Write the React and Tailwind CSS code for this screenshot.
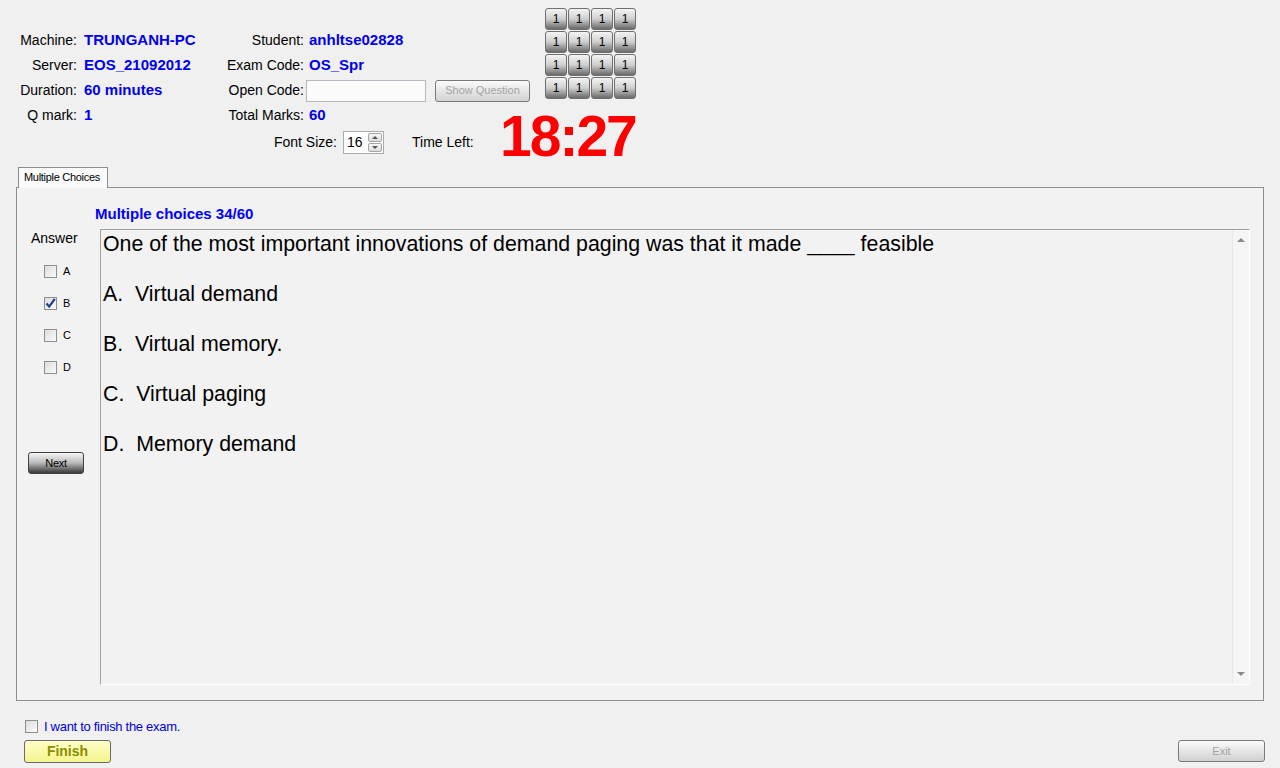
import React from "react";

const font = { fontFamily: '"Liberation Sans", Arial, sans-serif' };

const InfoRow = ({ l1, v1, l2, v2, children }) => (
  <div className="flex h-[25px] items-center text-[14px] text-black">
    <div className="w-[77px] shrink-0 text-right">{l1}</div>
    <div className="ml-[7px] w-[116px] shrink-0 text-[15px] font-bold text-[#0000ee]">{v1}</div>
    <div className="w-[104px] shrink-0 text-right">{l2}</div>
    {children ? children : <div className="ml-[5px] shrink-0 text-[15px] font-bold text-[#0000ee]">{v2}</div>}
  </div>
);

const GridButton = () => (
  <div className="flex h-[22px] w-[22px] items-center justify-center rounded-[3px] border border-[#6f6f6f] bg-linear-to-b from-[#f4f4f4] via-[#cfcfcf] to-[#6a6a6a] text-[12px] leading-none text-black">
    1
  </div>
);

const Checkbox = ({ checked }) => (
  <div className="relative h-[13px] w-[13px] shrink-0 border border-[#8e8f8f] bg-linear-to-br from-[#dcdcdc] to-[#fbfbfb]">
    {checked && (
      <svg viewBox="0 0 13 13" className="absolute -left-px -top-px h-[13px] w-[13px]">
        <path d="M2.5 6.5 L5.2 9.6 L10.8 1.8" fill="none" stroke="#1c3c8c" strokeWidth="2.2" />
      </svg>
    )}
  </div>
);

export default function App() {
  const options = ["A.  Virtual demand", "B.  Virtual memory.", "C.  Virtual paging", "D.  Memory demand"];
  return (
    <div className="h-[768px] w-[1280px] overflow-hidden bg-[#f0f0f0]" style={font}>
      {/* header */}
      <div className="flex h-[167px]">
        <div className="w-[500px] shrink-0 pt-[28px]">
          <InfoRow l1="Machine:" v1="TRUNGANH-PC" l2="Student:" v2="anhltse02828" />
          <InfoRow l1="Server:" v1="EOS_21092012" l2="Exam Code:" v2="OS_Spr" />
          <InfoRow l1="Duration:" v1="60 minutes" l2="Open Code:">
            <div className="ml-[2px] h-[22px] w-[120px] shrink-0 border border-[#b5b8bf] bg-[#fbfbfb]" />
            <div className="ml-[9px] flex h-[22px] w-[95px] shrink-0 items-center justify-center rounded-[3px] border border-[#7a7a7a] bg-linear-to-b from-[#fbfbfb] to-[#d2d2d2] text-[11px] text-[#a3a3a3]">
              Show Question
            </div>
          </InfoRow>
          <InfoRow l1="Q mark:" v1="1" l2="Total Marks:" v2="60" />
          <div className="flex h-[28px] items-center text-[14px] text-black">
            <div className="w-[337px] shrink-0 text-right">Font Size:</div>
            <div className="ml-[6px] flex h-[23px] w-[41px] shrink-0 items-center border border-[#a9abb2] bg-white">
              <span className="ml-[3px] flex-1 text-[14px]">16</span>
              <div className="mr-[1px] flex h-[19px] w-[14px] flex-col gap-[1px]">
                <div className="flex flex-1 items-center justify-center rounded-[2px] border border-[#a6a6a6] bg-linear-to-b from-[#f6f6f6] to-[#dcdcdc]">
                  <div className="h-0 w-0 border-x-[3px] border-b-[3px] border-x-transparent border-b-[#555]" />
                </div>
                <div className="flex flex-1 items-center justify-center rounded-[2px] border border-[#a6a6a6] bg-linear-to-b from-[#f6f6f6] to-[#dcdcdc]">
                  <div className="h-0 w-0 border-x-[3px] border-t-[3px] border-x-transparent border-t-[#555]" />
                </div>
              </div>
            </div>
            <div className="ml-[28px] shrink-0">Time Left:</div>
          </div>
        </div>
        <div className="flex flex-col">
          <div className="ml-[45px] mt-[8px] grid grid-cols-[repeat(4,22px)] gap-[1px]">
            {Array.from({ length: 16 }).map((_, i) => (
              <GridButton key={i} />
            ))}
          </div>
          <div className="mt-[9px] text-[57px] font-bold leading-none tracking-[-2px] text-[#ff0000]">18:27</div>
        </div>
      </div>

      {/* tab */}
      <div className="ml-[18px] flex h-[20px] w-[90px] items-center border border-b-0 border-[#8c8e94] bg-[#fafafa] pl-[5px] text-[11px] tracking-[-0.3px] text-black">
        Multiple Choices
      </div>
      <div className="relative mx-[16px] h-[514px] border border-[#8c8e94] bg-[#f2f2f2]">
        <div className="absolute -top-px left-[2px] h-px w-[88px] bg-[#fafafa]" />
        <div className="pl-[78px] pt-[17px] text-[15px] font-bold leading-[18px] text-[#0000ff]">Multiple choices 34/60</div>
        <div className="flex">
          <div className="w-[83px] shrink-0">
            <div className="mt-[7px] pl-[14px] text-[14px] leading-[16px] text-black">Answer</div>
            <div className="mt-[19px] flex flex-col gap-[19px] pl-[27px]">
              {["A", "B", "C", "D"].map((k) => (
                <div key={k} className="flex h-[13px] items-center">
                  <Checkbox checked={k === "B"} />
                  <span className="ml-[6px] text-[11px] text-black">{k}</span>
                </div>
              ))}
            </div>
            <div className="ml-[11px] mt-[78px] flex h-[22px] w-[56px] items-center justify-center rounded-[3px] border border-[#404040] bg-linear-to-b from-[#f6f6f6] via-[#b9b9b9] to-[#3c3c3c] text-[11px] tracking-[-0.3px] text-black">
              Next
            </div>
          </div>
          <div className="mt-[6px] flex h-[456px] w-[1150px] border border-[#a0a0a0] border-b-white border-r-white">
            <div className="-mt-px flex flex-1 flex-col gap-[20px] pl-[2px] text-[21.33px] leading-[30px] text-black">
              <div>One of the most important innovations of demand paging was that it made ____ feasible</div>
              {options.map((o) => (
                <div key={o} className="whitespace-pre">{o}</div>
              ))}
            </div>
            <div className="flex w-[17px] flex-col items-center justify-between border-l border-[#e8e8e8] bg-[#f5f5f5] py-[8px]">
              <div className="h-0 w-0 border-x-[4px] border-b-[4px] border-x-transparent border-b-[#8a8a8a]" />
              <div className="h-0 w-0 border-x-[4px] border-t-[4px] border-x-transparent border-t-[#8a8a8a]" />
            </div>
          </div>
        </div>
      </div>

      {/* bottom */}
      <div className="ml-[25px] mt-[19px] flex h-[13px] items-center">
        <Checkbox />
        <span className="ml-[6px] text-[13px] tracking-[-0.3px] text-[#0000dd]">I want to finish the exam.</span>
      </div>
      <div className="mt-[7px] flex justify-between pl-[24px] pr-[15px]">
        <div className="flex h-[23px] w-[87px] items-center justify-center rounded-[3px] border border-[#6a6a6a] bg-linear-to-b from-[#ffffc8] to-[#f4f48a] text-[14px] font-bold text-[#8c8c00]">
          Finish
        </div>
        <div className="flex h-[22px] w-[87px] items-center justify-center rounded-[3px] border border-[#7a7a7a] bg-linear-to-b from-[#fbfbfb] to-[#d0d0d0] text-[11px] text-[#a3a3a3]">
          Exit
        </div>
      </div>
    </div>
  );
}
